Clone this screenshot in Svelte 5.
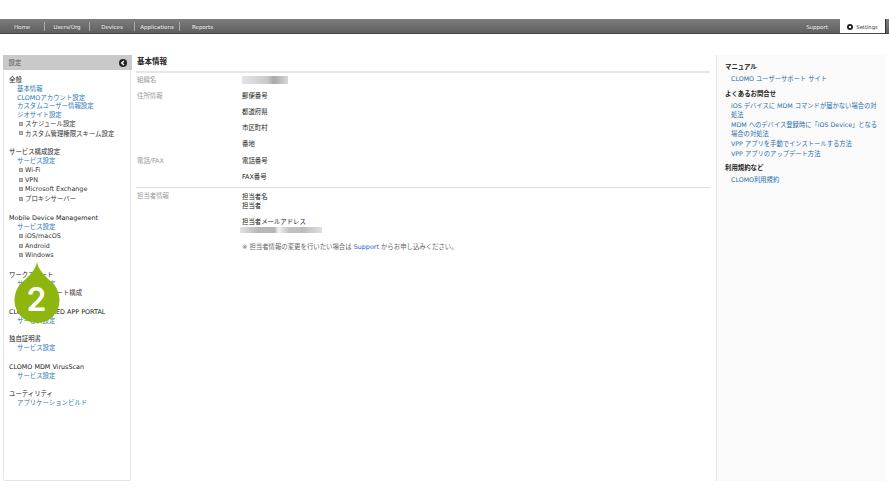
<script>
	const tabs = ['Home', 'Users/Org', 'Devices', 'Applications', 'Reports'];

	const groups = [
		{ title: '全般', items: [
			{ label: '基本情報', link: true },
			{ label: 'CLOMOアカウント設定', link: true },
			{ label: 'カスタムユーザー情報設定', link: true },
			{ label: 'ジオサイト設定', link: true },
			{ label: 'スケジュール設定' },
			{ label: 'カスタム管理権限スキーム設定' }
		] },
		{ title: 'サービス構成設定', items: [
			{ label: 'サービス設定', link: true },
			{ label: 'Wi-Fi' },
			{ label: 'VPN' },
			{ label: 'Microsoft Exchange' },
			{ label: 'プロキシサーバー' }
		] },
		{ title: 'Mobile Device Management', items: [
			{ label: 'サービス設定', link: true },
			{ label: 'iOS/macOS' },
			{ label: 'Android' },
			{ label: 'Windows' }
		] },
		{ title: 'ワークスマート', items: [
			{ label: 'サービス設定', link: true },
			{ label: 'ワークスマート構成' }
		] },
		{ title: 'CLOMO SECURED APP PORTAL', items: [{ label: 'サービス設定', link: true }] },
		{ title: '独自証明書', items: [{ label: 'サービス設定', link: true }] },
		{ title: 'CLOMO MDM VirusScan', items: [{ label: 'サービス設定', link: true }] },
		{ title: 'ユーティリティ', items: [{ label: 'アプリケーションビルド', link: true }] }
	];

	const help = [
		{ title: 'マニュアル', links: ['CLOMO ユーザーサポート サイト'] },
		{ title: 'よくあるお問合せ', links: [
			'iOS デバイスに MDM コマンドが届かない場合の対処法',
			'MDM へのデバイス登録時に「iOS Device」となる場合の対処法',
			'VPP アプリを手動でインストールする方法',
			'VPP アプリのアップデート方法'
		] },
		{ title: '利用規約など', links: ['CLOMO利用規約'] }
	];
</script>

<div class="page">
	<nav class="topbar">
		<ul class="tabs">
			{#each tabs as tab}
				<li>{tab}</li>
			{/each}
		</ul>
		<span class="support">Support</span>
		<span class="settings-tab"><i class="gear"></i>Settings</span>
	</nav>

	<div class="columns">
		<aside class="sidebar">
			<header class="side-head">
				<span>設定</span>
				<svg width="8" height="8" viewBox="0 0 8 8">
					<circle cx="4" cy="4" r="4" fill="#222" />
					<path d="M4.9 1.9 2.8 4l2.100 2.100" fill="none" stroke="#fff" stroke-width="1.4" />
				</svg>
			</header>
			{#each groups as group}
				<section class="group">
					<h3>{group.title}</h3>
					{#each group.items as item}
						{#if item.link}
							<a class="side-link" href="#top">{item.label}</a>
						{:else}
							<div class="side-node"><i class="plus"></i>{item.label}</div>
						{/if}
					{/each}
				</section>
			{/each}
		</aside>

		<main class="content">
			<h2>基本情報</h2>
			<div class="row first">
				<div class="key">組織名</div>
				<div class="val"><div class="blur org"></div></div>
			</div>
			<div class="row address">
				<div class="key">住所情報</div>
				<div class="val stack">
					<p>郵便番号</p>
					<p>都道府県</p>
					<p>市区町村</p>
					<p>番地</p>
				</div>
			</div>
			<div class="row phone">
				<div class="key">電話/FAX</div>
				<div class="val stack">
					<p>電話番号</p>
					<p>FAX番号</p>
				</div>
			</div>
			<div class="row contact">
				<div class="key">担当者情報</div>
				<div class="val">
					<p>担当者名</p>
					<p class="tight">担当者</p>
					<p class="mail">担当者メールアドレス</p>
					<div class="blur email"></div>
					<p class="note">※ 担当者情報の変更を行いたい場合は <a href="#top">Support</a> からお申し込みください。</p>
				</div>
			</div>
		</main>

		<aside class="help">
			{#each help as block}
				<h4>{block.title}</h4>
				<ul>
					{#each block.links as link}
						<li><a href="#top">{link}</a></li>
					{/each}
				</ul>
			{/each}
		</aside>
	</div>

	<div class="badge">
		<svg width="46" height="62" viewBox="0 0 46 62">
			<path d="M23 0C24.500 8 31 14 37 19.500C42.500 24 45.500 31 45.500 38.500A22.500 22.500 0 0 1 .5 38.500C.5 31 3.500 24 9 19.500C15 14 21.500 8 23 0Z" fill="#8fb50f" />
		</svg>
		<span>2</span>
	</div>
</div>

<style>
	:global(body) {
		margin: 0;
		background: #fff;
		font-family: "DejaVu Sans", "Noto Sans CJK JP", sans-serif;
		font-size: 6.4px;
		color: #333;
	}

	.page {
		position: relative;
		width: 889px;
		height: 500px;
		padding-top: 19px;
		box-sizing: border-box;
		overflow: hidden;
	}

	.topbar {
		display: flex;
		align-items: center;
		height: 15px;
		box-sizing: border-box;
		background: linear-gradient(#7d7d7d, #5f5f5f);
		border-bottom: 1px solid #444;
		color: #fff;
		font-size: 5.500px;
		text-shadow: 0 0 1px #444;
	}

	.tabs {
		display: flex;
		flex: 1;
		margin: 0;
		padding: 0;
		list-style: none;
	}

	.tabs li {
		width: 45px;
		height: 9px;
		line-height: 11px;
		text-align: center;
		border-right: 1px solid #aaa;
		box-sizing: border-box;
	}

	.tabs li:last-child {
		border-right: 0;
	}

	.support {
		width: 30px;
		margin-right: 8px;
		padding-top: 2px;
		text-align: center;
	}

	.settings-tab {
		display: flex;
		align-items: center;
		justify-content: center;
		gap: 3px;
		width: 46px;
		height: 14px;
		margin-right: 3px;
		padding-top: 1px;
		box-sizing: border-box;
		background: #fff;
		color: #333;
		font-size: 5.200px;
		text-shadow: none;
		border-right: 1px solid #333;
	}

	.gear {
		width: 6px;
		height: 6px;
		border-radius: 50%;
		background: radial-gradient(circle, #fff 0 1px, #222 1.2px);
	}

	.columns {
		display: flex;
		margin-top: 21px;
		padding-left: 3px;
	}

	.sidebar {
		width: 128px;
		height: 426px;
		box-sizing: border-box;
		border: 1px solid #e4e4e4;
		border-width: 0 1.500px 1.500px 1.500px;
		border-radius: 0 0 2px 2px;
	}

	.side-head {
		display: flex;
		align-items: center;
		justify-content: space-between;
		height: 15px;
		margin: 0 -1.500px 6px;
		padding: 0 5px 0 6px;
		background: #c9c9c9;
		color: #555;
	}

	.group {
		margin: 0 0 10px 5px;
	}

	.group:nth-of-type(2),
	.group:nth-of-type(3) {
		margin-bottom: 10.500px;
	}

	h3 {
		margin: 0;
		height: 9px;
		line-height: 9px;
		font-size: 6.400px;
		font-weight: normal;
		color: #222;
		white-space: nowrap;
	}

	.side-link {
		display: block;
		height: 8.500px;
		line-height: 8.500px;
		margin-left: 8px;
		color: #2a78b4;
		text-decoration: none;
		white-space: nowrap;
	}

	.side-node {
		display: flex;
		align-items: center;
		height: 9.500px;
		margin-left: 10px;
		color: #333;
		white-space: nowrap;
	}

	.plus {
		width: 4px;
		height: 4px;
		margin-right: 2px;
		background: #bbb;
		border: .5px solid #999;
		box-sizing: border-box;
	}

	.content {
		width: 574px;
		margin-left: 5px;
		color: #333;
	}

	h2 {
		margin: 0;
		height: 16px;
		padding-left: 1px;
		line-height: 14px;
		font-size: 7.500px;
		color: #222;
		border-bottom: 2px solid #e6e6e6;
		box-sizing: content-box;
	}

	.row {
		display: flex;
	}

	.first {
		margin-top: 3px;
		height: 16px;
		line-height: 9px;
	}

	.address {
		height: 65px;
	}

	.phone {
		height: 30px;
		border-bottom: 1px solid #ddd;
		box-sizing: content-box;
	}

	.contact {
		margin-top: 3.500px;
	}

	.key {
		width: 106px;
		padding-left: 1px;
		box-sizing: border-box;
		color: #999;
		line-height: 9px;
	}

	.val {
		color: #222;
	}

	.contact .val {
		padding-top: 1px;
	}

	p {
		margin: 0;
		height: 9.500px;
		line-height: 9.500px;
		white-space: nowrap;
	}

	.stack p {
		height: 16px;
	}

	.mail {
		margin-top: 6px;
	}

	.note {
		margin-top: 10px;
		color: #666;
	}

	.note a {
		color: #1a5fc8;
		text-decoration: none;
	}

	.blur {
		height: 8px;
		background: linear-gradient(90deg, #e4e4e4 0%, #d4d4d4 35%, #c8c8c8 55%, #a9a9a9 70%, #c0c0c0 85%, #d8d8d8 100%);
	}

	.org {
		width: 46px;
	}

	.email {
		width: 82px;
		height: 6px;
		margin-left: -2px;
		background: linear-gradient(90deg, #e2e2e2 0%, #b9b9b9 22%, #b5b5b5 42%, #f1f1f1 47%, #c0c0c0 60%, #bdbdbd 78%, #e0e0e0 100%);
	}

	.help {
		width: 169px;
		height: 426px;
		margin-left: 6px;
		padding: 8px 0 0 8px;
		box-sizing: border-box;
		background: #fafafa;
		border-left: 1.500px solid #e4e4e4;
	}

	h4 {
		margin: 0 0 2px;
		font-size: 6.400px;
		line-height: 9px;
		color: #222;
	}

	.help ul {
		width: 149px;
		margin: 0 0 6.500px;
		padding: 0 0 0 6px;
		list-style: none;
		font-size: 6.300px;
	}

	.help li {
		line-height: 9px;
		margin-bottom: 1px;
	}

	.help a {
		color: #2a6ea8;
		text-decoration: none;
	}

	.badge {
		position: absolute;
		left: 13.500px;
		top: 262px;
		width: 46px;
		height: 62px;
	}

	.badge svg {
		display: block;
	}

	.badge span {
		position: absolute;
		left: 0;
		right: 0;
		top: 20px;
		text-align: center;
		color: #fff;
		font: 600 32px/36px Inter, sans-serif;
	}
</style>
